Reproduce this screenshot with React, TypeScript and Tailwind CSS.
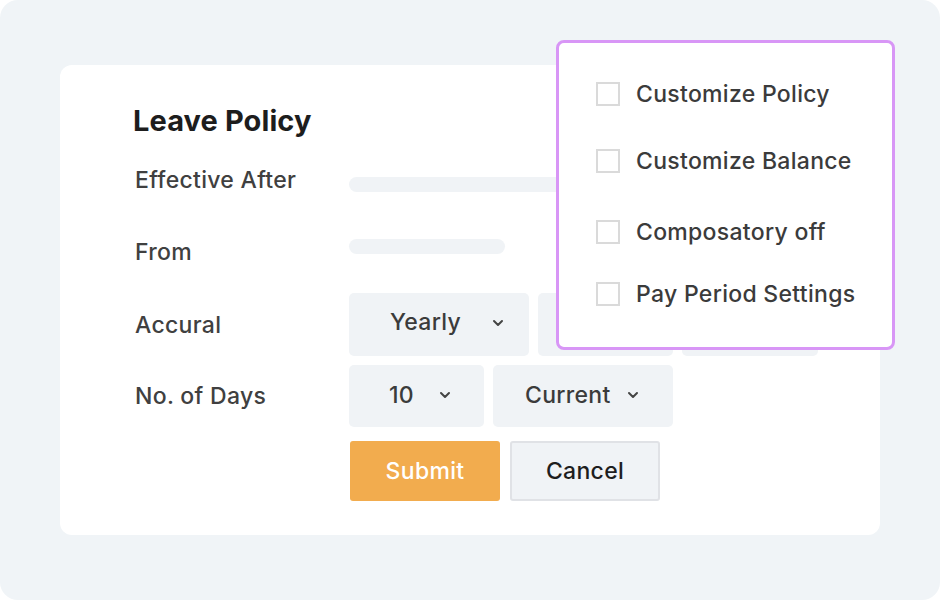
const Chevron = () => (
  <svg width="12" height="8" viewBox="0 0 12 8" fill="none" className="shrink-0">
    <path d="M2 2l4 4 4-4" stroke="#444" strokeWidth="2" strokeLinecap="round" strokeLinejoin="round" />
  </svg>
);

const CheckItem = ({ label, className }: { label: string; className: string }) => (
  <div className={`flex items-center gap-[16px] h-[30px] ${className}`}>
    <span className="w-[24px] h-[24px] border-2 border-[#dadada] bg-white shrink-0" />
    <span className="text-[23px] font-medium text-[#3b3b3b] leading-[30px] tracking-[0.3px]">{label}</span>
  </div>
);

const labelCls =
  "w-[216px] pl-[2px] text-[23px] font-medium text-[#404040] leading-[30px] tracking-[0.3px]";

const App = () => {
  return (
    <div
      className="relative w-[940px] h-[601px] bg-white"
      style={{ fontFamily: "Inter, 'Noto Sans', sans-serif" }}
    >
      <div className="h-[600px] bg-[#f0f4f7] rounded-[18px] pt-[65px] pl-[60px]">
        <div className="w-[820px] h-[470px] bg-white rounded-[12px] pt-[38px] pl-[73px]">
          <h1 className="text-[29px] font-bold text-[#1d1d1d] leading-[36px] tracking-[0.1px]">
            Leave Policy
          </h1>

          <div className="flex items-start mt-[26px]">
            <div className={labelCls}>Effective After</div>
            <div className="mt-[12px] w-[260px] h-[15px] rounded-full bg-[#f0f3f6]" />
          </div>

          <div className="flex items-start mt-[42px]">
            <div className={labelCls}>From</div>
            <div className="mt-[2px] w-[156px] h-[15px] rounded-full bg-[#f0f3f6]" />
          </div>

          <div className="flex items-center mt-[26px]">
            <div className={labelCls}>Accural</div>
            <div className="flex gap-[9px]">
              <div className="w-[180px] h-[63px] rounded-[5px] bg-[#f0f3f6] flex items-center pl-[41px] gap-[31px] pb-[4px]">
                <span className="text-[23px] font-medium text-[#3b3b3b] tracking-[0.3px]">Yearly</span>
                <Chevron />
              </div>
              <div className="w-[135px] h-[63px] rounded-[5px] bg-[#f0f3f6]" />
              <div className="w-[136px] h-[63px] rounded-[5px] bg-[#f0f3f6]" />
            </div>
          </div>

          <div className="flex items-center mt-[9px]">
            <div className={labelCls}>No. of Days</div>
            <div className="flex gap-[9px]">
              <div className="w-[135px] h-[62px] rounded-[5px] bg-[#f0f3f6] flex items-center pl-[40px] gap-[25px] pb-[2px]">
                <span className="text-[23px] font-medium text-[#3b3b3b] tracking-[0.3px]">10</span>
                <Chevron />
              </div>
              <div className="w-[180px] h-[62px] rounded-[5px] bg-[#f0f3f6] flex items-center pl-[32px] gap-[16px] pb-[2px]">
                <span className="text-[23px] font-medium text-[#3b3b3b] tracking-[0.3px]">Current</span>
                <Chevron />
              </div>
            </div>
          </div>

          <div className="flex gap-[10px] mt-[14px] pl-[217px]">
            <button className="w-[150px] h-[60px] rounded-[3px] bg-[#f2ac4e] text-white text-[23px] font-medium tracking-[0.3px]">
              Submit
            </button>
            <button className="w-[150px] h-[60px] rounded-[3px] bg-[#f0f3f6] border-2 border-[#e0e2e6] text-[#1e1e1e] text-[23px] font-medium tracking-[0.3px]">
              Cancel
            </button>
          </div>
        </div>
      </div>

      <div className="absolute left-[556px] top-[40px] w-[339px] h-[310px] bg-white border-[3px] border-[#d896f6] rounded-[8px] pl-[37px] pt-[36px]">
        <CheckItem label="Customize Policy" className="" />
        <CheckItem label="Customize Balance" className="mt-[37px]" />
        <CheckItem label="Composatory off" className="mt-[41px]" />
        <CheckItem label="Pay Period Settings" className="mt-[32px]" />
      </div>
    </div>
  );
};

export default App;
